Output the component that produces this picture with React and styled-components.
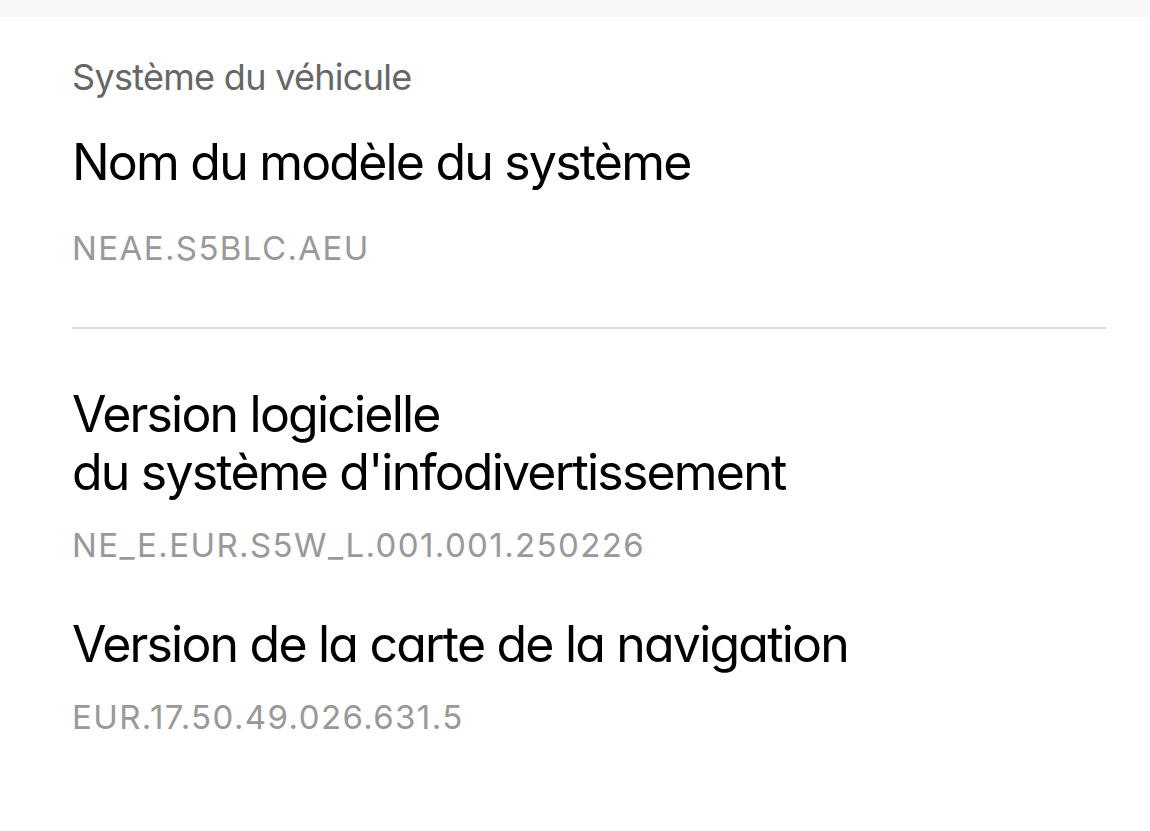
import styled, { createGlobalStyle } from "styled-components"

const GlobalStyle = createGlobalStyle`
  body {
    margin: 0;
    background: #ffffff;
    font-family: Inter, "Noto Sans", sans-serif;
    font-feature-settings: "cv11";
  }
`

const sections = [
  {
    header: "Système du véhicule",
    items: [{ title: ["Nom du modèle du système"], value: "NEAE.S5BLC.AEU" }],
    tall: true,
  },
  {
    items: [
      {
        title: ["Version logicielle", "du système d'infodivertissement"],
        value: "NE_E.EUR.S5W_L.001.001.250226",
      },
      { title: ["Version de la carte de la navigation"], value: "EUR.17.50.49.026.631.5" },
    ],
  },
]

function App() {
  return (
    <Page>
      <GlobalStyle />
      <TopBand />
      <Content>
        {sections.map((section, i) => (
          <Section key={i}>
            {section.header && <Header>{section.header}</Header>}
            <Items>
              {section.items.map((item) => (
                <Item key={item.value} $tall={section.tall}>
                  <Title>
                    {item.title.map((line) => (
                      <span key={line}>{line}</span>
                    ))}
                  </Title>
                  <Value>{item.value}</Value>
                </Item>
              ))}
            </Items>
            {i < sections.length - 1 && <Divider />}
          </Section>
        ))}
      </Content>
    </Page>
  )
}

export default App

const Page = styled.div`
  width: 1150px;
  min-height: 831px;
  background: #ffffff;
`

const TopBand = styled.div`
  height: 17px;
  background: #f8f8f8;
`

const Content = styled.div`
  padding: 38px 44px 0 72px;
  display: flex;
  flex-direction: column;
`

const Section = styled.div`
  display: flex;
  flex-direction: column;
`

const Header = styled.div`
  font-size: 36px;
  line-height: 44px;
  letter-spacing: -0.7px;
  color: #666666;
  margin-bottom: 34px;
`

const Items = styled.div`
  display: flex;
  flex-direction: column;
  gap: 50px;
`

const Item = styled.div`
  display: flex;
  flex-direction: column;
  gap: ${(p) => (p.$tall ? "37px" : "24px")};
`

const Title = styled.div`
  display: flex;
  flex-direction: column;
  font-size: 50px;
  line-height: 58px;
  letter-spacing: -1.8px;
  color: #000000;
`

const Value = styled.div`
  font-size: 33px;
  line-height: 40px;
  letter-spacing: 1.4px;
  color: #999999;
`

const Divider = styled.div`
  height: 2px;
  background: #dcdcdc;
  margin: 59px 0 56px;
`
